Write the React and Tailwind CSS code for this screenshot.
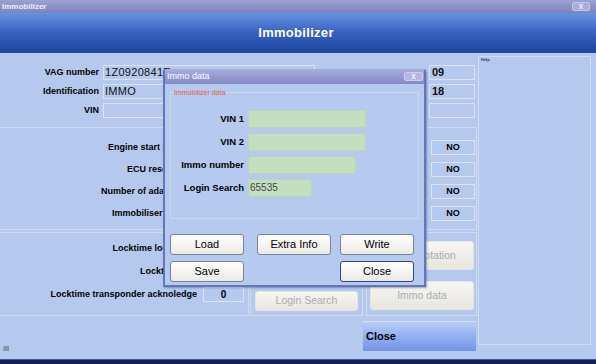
import React from 'react';

const font = "font-['Liberation_Sans',Arial,sans-serif]";

const TopRow = ({ label, value, inputW, right }) => (
  <div className="flex h-[15px] items-center">
    <div className="w-[99px] text-right text-[9px] font-bold text-black">{label}</div>
    <div className={`ml-[4px] h-full ${inputW} border border-[#dbe2f2] pl-[1px] text-[11px] leading-[13px] tracking-[0.3px] text-[#111]`}>
      {value}
    </div>
    <div className="ml-auto mr-[2px] h-full w-[46px] border border-[#dbe2f2] pl-[2px] text-[11px] font-bold leading-[13px] text-[#111]">
      {right}
    </div>
  </div>
);

const StatusRow = ({ label }) => (
  <div className="flex h-[15px] items-center">
    <div className="w-[199px] text-right text-[9px] font-bold text-black">{label}</div>
    <div className="ml-auto mr-[1px] flex h-full w-[44px] items-center justify-center border border-[#dbe2f2] text-[9px] font-bold text-black">
      NO
    </div>
  </div>
);

const LockRow = ({ label, value }) => (
  <div className="flex h-[15px] items-center">
    <div className="w-[197px] text-right text-[9px] font-bold text-black">{label}</div>
    <div className="ml-[6px] flex h-full w-[41px] items-center justify-center border border-[#dbe2f2] text-[10px] font-bold text-black">
      {value}
    </div>
  </div>
);

const DialogRow = ({ label, w, value }) => (
  <div className="flex h-[18px] items-center">
    <div className="w-[73px] text-right text-[9.5px] font-bold text-black">{label}</div>
    <div className={`ml-[4px] h-full ${w} border border-[#b9d5b5] bg-[#c4dfc0] pl-[1px] text-[10px] leading-[16px] text-[#444]`}>
      {value}
    </div>
  </div>
);

const DlgButton = ({ children, focused, className = '' }) => (
  <button
    className={`block h-[21px] w-[74px] shrink-0 rounded-[3px] border bg-gradient-to-b from-white to-[#ebeae4] text-[11px] leading-[19px] text-black ${
      focused ? 'border-[#34448c]' : 'border-[#76839c]'
    } ${className}`}
  >
    {children}
  </button>
);

const GreyButton = ({ children, className }) => (
  <button
    className={`block rounded-[3px] border border-[#e4e4e2] bg-gradient-to-b from-[#f7f6f3] to-[#e7e6e0] text-[10.5px] text-[#acacac] ${className}`}
  >
    {children}
  </button>
);

export default function App() {
  return (
    <div className={`relative flex h-[364px] w-[596px] flex-col overflow-hidden bg-[#b5c9ef] ${font}`}>
      {/* window title bar */}
      <div className="flex h-[13px] items-center bg-gradient-to-b from-[#9ca1d3] to-[#7e83bd] pl-[2px]">
        <span className="text-[8px] font-bold text-[#eef0ff]">Immobilizer</span>
        <div className="ml-auto mr-[6px] flex h-[9px] w-[18px] items-center justify-center rounded-[2px] border border-[#c3c6e6] bg-[#a9addb] text-[9px] leading-none text-white">
          x
        </div>
      </div>

      {/* header */}
      <div className="flex h-[40px] items-center justify-center border-b border-[#2a4a9c] bg-gradient-to-b from-[#6792e2] via-[#3862c0] to-[#1b459d]">
        <span className="ml-[-4px] text-[13px] font-bold tracking-[0.3px] text-white">Immobilizer</span>
      </div>

      <div className="flex flex-1">
        {/* left column */}
        <div className="flex w-[477px] flex-col">
          <div className="flex flex-col gap-[4px] pt-[12px]">
            <TopRow label="VAG number" value="1Z0920841E" inputW="w-[212px]" right="09" />
            <TopRow label="Identification" value="IMMO" inputW="w-[212px]" right="18" />
            <TopRow label="VIN" value="" inputW="w-[318px]" right="" />
          </div>

          <div className="mt-[9px] flex flex-col gap-[7px] border-y border-r border-[#d2dbee] pb-[8px] pt-[12px]">
            <StatusRow label="Engine start possible" />
            <StatusRow label="ECU reset status" />
            <StatusRow label="Number of adaptations" />
            <StatusRow label="Immobiliser enabled" />
          </div>

          <div className="mt-[2px] flex h-[84px]">
            <div className="flex w-[249px] flex-col gap-[8px] border-y border-r border-[#d2dbee] pt-[8px]">
              <LockRow label="Locktime login time" value="0" />
              <LockRow label="Locktime key" value="0" />
              <LockRow label="Locktime transponder acknoledge" value="0" />
            </div>
            <div className="ml-[1px] flex w-[113px] flex-col justify-end border border-[#d2dbee] pb-[4px] pl-[4px]">
              <GreyButton className="h-[20px] w-[103px]">Login Search</GreyButton>
            </div>
            <div className="ml-[3px] flex w-[111px] flex-col gap-[11px] border border-[#d2dbee] pl-[3px] pt-[8px]">
              <GreyButton className="h-[29px] w-[104px]">Login Rotation</GreyButton>
              <GreyButton className="h-[29px] w-[104px]">Immo data</GreyButton>
            </div>
          </div>

          <div className="mt-[5px] flex items-end">
            <span className="mb-[-1px] ml-[3px] text-[7px] leading-none tracking-[-0.5px] text-[#555]">IIII</span>
            <button className="ml-auto mr-[1px] flex h-[30px] w-[113px] items-center border-t border-[#d4e0fa] bg-gradient-to-b from-[#b9cdf6] via-[#93aef0] to-[#7594ea] pl-[3px] text-[11px] font-bold text-black">
              Close
            </button>
          </div>
        </div>

        {/* help panel */}
        <div className="ml-[1px] mt-[3px] h-[289px] w-[113px] border border-[#d3ddf2] pl-[2px] pt-[1px]">
          <span className="block text-[4px] font-bold leading-none text-[#333]">Help</span>
        </div>
      </div>

      {/* bottom strip */}
      <div className="h-[5px] border-t border-[#3d56a8] bg-[#14214f]" />

      {/* Immo data dialog */}
      <div className="absolute left-[163px] top-[69px] flex h-[218px] w-[263px] flex-col rounded-t-[3px] border-x-2 border-b-2 border-[#6476bb] bg-[#b6caf0] shadow-[1px_1px_2px_rgba(40,50,110,0.4)]">
        <div className="flex h-[15px] shrink-0 items-center rounded-t-[2px] bg-gradient-to-b from-[#a9aedd] to-[#8389c4] pl-[2px]">
          <span className="text-[9px] text-white">Immo data</span>
          <div className="ml-auto mr-[1px] flex h-[9px] w-[19px] items-center justify-center rounded-[2px] border border-[#cdd0ec] bg-[#b3b7e1] text-[9px] leading-none text-white">
            x
          </div>
        </div>

        <div className="flex flex-col px-[5px] pb-[3px]">
          <div className="relative mt-[8px] flex h-[127px] w-[249px] flex-col gap-[5px] border border-[#cdd8ef] pt-[17px]">
            <span className="absolute -top-[5px] left-[2px] bg-[#b6caf0] px-[1px] text-[7px] leading-[9px] text-[#e2622c]">
              Immobilizer data
            </span>
            <DialogRow label="VIN 1" w="w-[118px]" value="" />
            <DialogRow label="VIN 2" w="w-[118px]" value="" />
            <DialogRow label="Immo number" w="w-[108px]" value="" />
            <DialogRow label="Login Search" w="w-[64px]" value="65535" />
          </div>

          <div className="mt-[15px] flex flex-col gap-[6px]">
            <div className="flex items-start">
              <DlgButton>Load</DlgButton>
              <DlgButton className="ml-[13px]">Extra Info</DlgButton>
              <DlgButton className="ml-[9px]">Write</DlgButton>
            </div>
            <div className="flex items-start">
              <DlgButton>Save</DlgButton>
              <DlgButton focused className="ml-[96px]">
                Close
              </DlgButton>
            </div>
          </div>
        </div>
      </div>
    </div>
  );
}
